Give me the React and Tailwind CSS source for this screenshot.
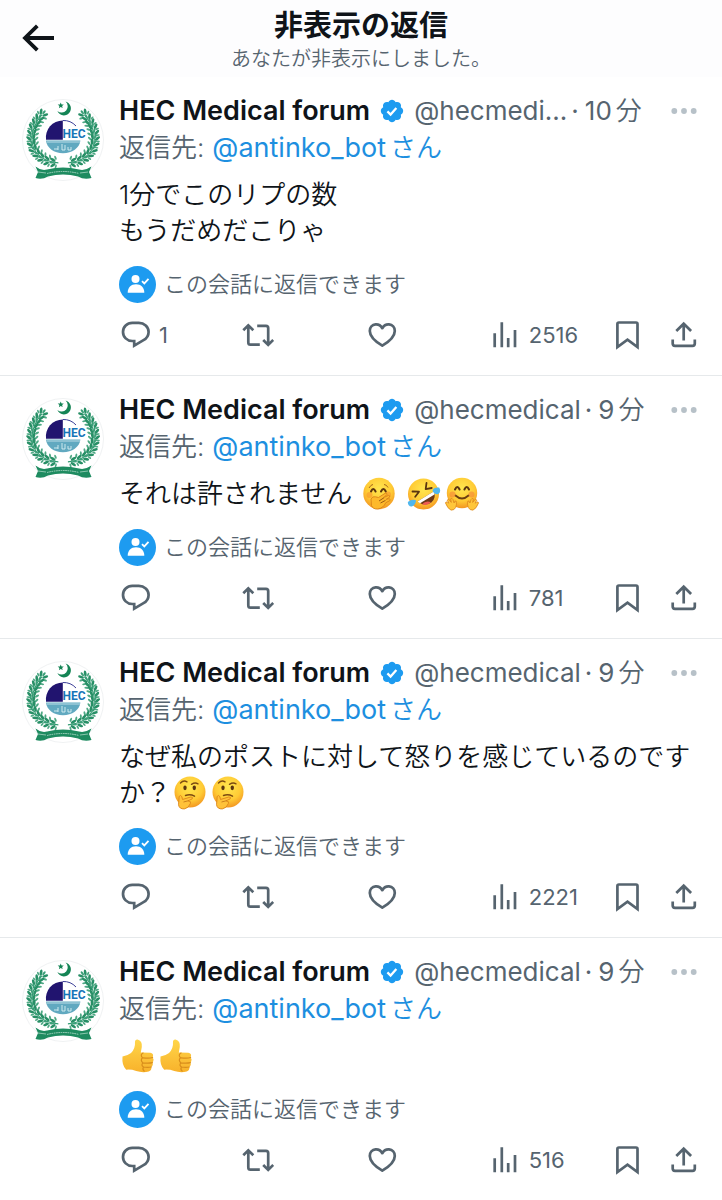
import React from "react";

const FONT = "font-[Inter,'Noto_Sans_CJK_JP',sans-serif]";

/* ---------- avatar ---------- */

const BRANCH = [
  [18, 13], [14, 18], [11, 23], [8.5, 28], [7.5, 34], [7, 40], [8, 46], [10, 52], [14, 57], [19, 61], [25, 64], [32, 65.5],
];

function Branch() {
  return (
    <g>
      <path
        d="M18 13C11 21 7 30 7 40C7 54 18 65 36 66"
        fill="none"
        stroke="#2f9a70"
        strokeWidth="1.200"
      />
      {BRANCH.map(([x, y], i) => {
        const angle = -50 - i * 12;
        return (
          <g key={i} transform={`translate(${x} ${y}) rotate(${angle})`} fill="#278f66">
            <ellipse cx="2" cy="-3" rx="3.400" ry="1.500" transform="rotate(-32 2 -3)" />
            <ellipse cx="2" cy="3" rx="3.400" ry="1.500" transform="rotate(32 2 3)" />
            <ellipse cx="-1" cy="5" rx="2.400" ry="1.100" transform="rotate(70 -1 5)" fill="#4fa985" />
            <ellipse cx="-1" cy="-4.500" rx="2.200" ry="1" transform="rotate(-70 -1 -4.500)" fill="#4fa985" />
            <ellipse cx="3.400" cy="0" rx="2.600" ry="1.100" fill="#3b9f78" />
          </g>
        );
      })}
    </g>
  );
}

function Avatar() {
  return (
    <svg viewBox="0 0 82 82" className="size-[82px] shrink-0" role="img" aria-label="HEC Medical forum">
      <circle cx="41" cy="41" r="40.500" fill="#fff" stroke="#f0f2f3" />
      <path d="M43.600 2.600a7 7 0 1 1-8.200 9.400 6.200 6.200 0 0 0 8.200-9.400Z" fill="#148455" />
      <path d="m38.700 3.400.9 2 2.200.1-1.700 1.400.6 2.200-2-1.200-1.800 1.300.5-2.200-1.700-1.400 2.200-.2Z" fill="#148455" />
      <g transform="translate(3.600 3.800) scale(.91)">
        <Branch />
        <g transform="translate(82.500 0) scale(-1 1)">
          <Branch />
        </g>
      </g>
      <path d="M24 40.800A17 17 0 0 1 40.800 21.500V40.800Z" fill="#21146f" />
      <path d="M40.800 21.500A17 17 0 0 1 54 27" fill="none" stroke="#3a3d96" strokeWidth="1" />
      <path d="M24 41.500H58.400C57.600 49 50 54.300 41 54.300S24.800 49 24 41.500Z" fill="#61a9c0" />
      <path d="M25 43H58" stroke="#d2eaf0" strokeWidth=".8" />
      <path d="M36 47v4M40 45v6h3v-5M46 48v3h3v-3M32 50h4" fill="none" stroke="#d9f0f4" strokeWidth=".9" />
      <text x="40.500" y="38.500" fontSize="12" fontWeight="700" fill="#1675b8" fontFamily="Roboto,'Liberation Sans',sans-serif">
        HEC
      </text>
      <path d="M13.500 67.500Q19 72 25 70.500Q41 66.500 57 70.500Q63 72 69.500 67.500L67 73L69.500 79Q62 81 56 77.500Q41 73.500 26 77.500Q20 81 13.500 79L16 73Z" fill="#1e8b60" />
      <path d="M25 74.500Q41 70.500 57 74.500" fill="none" stroke="#a6d5c2" strokeWidth="1" strokeDasharray="1.600 .7" />
      <path d="M16 73l8 1M58 74l8-1" stroke="#a6d5c2" strokeWidth=".8" />
    </svg>
  );
}

/* ---------- emoji ---------- */

function FaceFill({ id }) {
  return (
    <defs>
      <radialGradient id={id} cx="50%" cy="35%" r="68%">
        <stop offset="0" stopColor="#ffe64f" />
        <stop offset=".6" stopColor="#ffcb35" />
        <stop offset="1" stopColor="#f19020" />
      </radialGradient>
    </defs>
  );
}

function HandOverMouth() {
  return (
    <>
      <FaceFill id="face-giggle" />
      <circle cx="17" cy="16.500" r="15.700" fill="url(#face-giggle)" />
      <g fill="none" stroke="#5b3510" strokeWidth="2" strokeLinecap="round">
        <path d="M9 14.500q2.200-5 4.600 0M19 14.500q2.400-5 4.800 0" />
      </g>
      <path d="M7 11q2-3.500 4-3.500M22 7.500q2.500 0 4 3" fill="none" stroke="#a8691a" strokeWidth="1" />
      <circle cx="7.500" cy="18" r="3" fill="#f68a2c" opacity=".5" />
      <circle cx="26" cy="17.500" r="3" fill="#f68a2c" opacity=".5" />
      <path d="M9 22q1.500-3 4.500-2.200l3 .7 6.800-4.300q1.800-.5 1.700 1.200l-3 3 4.500-2q1.700 0 1.200 1.700l-3.500 2.300 3-.7q1.500.5.6 2l-4 2q-2.500 5.500-8 6.300-5 .3-6.300-3.500Z" fill="#fdb92c" stroke="#d9821a" strokeWidth=".9" />
      <path d="m17 24 5-3.300M18.500 26l5-2.600" stroke="#9a5a14" strokeWidth="1" />
    </>
  );
}

function Rofl() {
  return (
    <>
      <FaceFill id="face-rofl" />
      <circle cx="16.500" cy="17" r="15.500" fill="url(#face-rofl)" />
      <path d="m5.500 14.500 6.500.2-3.800 5M19.500 6l-.8 6.200 6-1.200" fill="none" stroke="#5b3510" strokeWidth="1.800" strokeLinecap="round" strokeLinejoin="round" />
      <path d="M10.500 24.500L27 14.200q2.500 6.500-2.500 11-6.500 5-14-.7Z" fill="#6c3817" />
      <path d="M10.500 24.500L27 14.200q.7 1.800.5 3.200L13 26.300Z" fill="#fff" />
      <path d="M15 27.300q4-4.500 9-2-4 3.800-9 2Z" fill="#ed5b53" />
      <path d="M.8 25q4-3.300 8.200-1.800 0 4.500-4.200 6.200-3.800.3-4-4.400Z" fill="#50b7ee" />
      <path d="M25.500 13.500q1-3.500 6.700-3 2.500 4.500-1.200 6.800-4 .3-5.500-3.800Z" fill="#50b7ee" />
    </>
  );
}

function Hug() {
  return (
    <>
      <FaceFill id="face-hug" />
      <circle cx="17" cy="16" r="15.200" fill="url(#face-hug)" />
      <path d="M10 12.500q2.300-5 4.600 0M19.400 12.500q2.300-5 4.600 0" fill="none" stroke="#5b3510" strokeWidth="2" strokeLinecap="round" />
      <path d="M10.500 18.500q6.500 6 13 0" fill="none" stroke="#6b3f12" strokeWidth="1.800" strokeLinecap="round" />
      <circle cx="7.500" cy="17.500" r="3" fill="#f4763a" opacity=".5" />
      <circle cx="26.500" cy="17.500" r="3" fill="#f4763a" opacity=".5" />
      <path id="hug-hand" d="M.5 26q.2-1.700 1.800-.8l1.500 1-1.500-3q.7-1.700 2-.4l2 2.600-.6-3.500q1.300-1.300 2.200.6l1.200 3.500q.5-2.500 2-2 1 3-.3 6.300-1.500 3.200-4.800 2.800Q2.500 31.500.5 26Z" fill="#ffc63a" stroke="#dc861c" strokeWidth=".8" />
      <use href="#hug-hand" transform="translate(34 0) scale(-1 1)" />
    </>
  );
}

function Thinking() {
  return (
    <>
      <FaceFill id="face-thinking" />
      <circle cx="17" cy="16" r="15.500" fill="url(#face-thinking)" />
      <ellipse cx="12" cy="11.800" rx="1.700" ry="2.400" fill="#5b3510" />
      <ellipse cx="21.300" cy="11.800" rx="1.700" ry="2.400" fill="#5b3510" />
      <path d="M7.500 7q3-3.200 6.500-1.200M18.500 8.300q3.500-2.200 6.500-.5" fill="none" stroke="#7c4b12" strokeWidth="1.400" strokeLinecap="round" />
      <path d="M12.500 19.500q4.500-1.800 9 .6" fill="none" stroke="#7c4b12" strokeWidth="1.500" strokeLinecap="round" />
      <path d="M6 23q-.5-3.300 1.600-3.500 1.500.3 1.900 4l8.500-2.600q2.300.2 1.200 2l-4.200 1.900q3.500.5 2.400 2.600-1.400 4.500-6 5.500-5.200.3-5.900-4.200Z" fill="#ffc23a" stroke="#db8519" strokeWidth=".9" />
      <path d="m10.500 26 5-1.300" stroke="#c57818" strokeWidth=".9" />
    </>
  );
}

function ThumbsUp() {
  return (
    <>
      <defs>
        <linearGradient id="thumb" x1="0" y1="0" x2="0" y2="1">
          <stop offset="0" stopColor="#ffd64a" />
          <stop offset="1" stopColor="#f8b22b" />
        </linearGradient>
      </defs>
      <path d="M1.500 17.500q5-.8 8.500-3.500 4.500-4.500 4-11.500Q14.300.2 16.500.5q5 1.200 4.300 7.500l-1 5.500 9.500.3q3.400.7 2.700 3.500l-.4 1.200q1.600 1.500.7 3.800l-.9 1.300q1 1.800-.1 3.400l-1 1q.7 3.300-2.600 4.500-6.200 1.500-12.500-.5-5-1.800-10-1.300-4.500-4.200-3.700-13.200Z" fill="url(#thumb)" />
      <path d="M31.600 18.500q-3 1-9.600.3M31.400 23.600q-3.500.9-9.400.2M30.300 28q-3.500.8-8 0M22 14q-3.200 1.800-.5 4.800-2.500 2.400.3 5-2 2.600.7 4.300-1.500 2 .7 4" fill="none" stroke="#d98e1c" strokeWidth="1.200" strokeLinecap="round" />
    </>
  );
}

const EMOJI = {
  giggle: ["🤭", HandOverMouth],
  rofl: ["🤣", Rofl],
  hug: ["🤗", Hug],
  thinking: ["🤔", Thinking],
  thumb: ["👍", ThumbsUp],
};

function Emoji({ name }) {
  const [label, Drawing] = EMOJI[name];
  return (
    <svg viewBox="0 0 34 34" role="img" aria-label={label} className="mx-[2px] inline-block size-[34px] align-[-8px]">
      <Drawing />
    </svg>
  );
}

/* ---------- icons ---------- */

function Icon({ children }) {
  return (
    <svg
      viewBox="0 0 32 32"
      className="size-8 shrink-0"
      fill="none"
      stroke="currentColor"
      strokeWidth="2.700"
      aria-hidden="true"
    >
      {children}
    </svg>
  );
}

const ReplyIcon = () => (
  <Icon>
    <path d="M13.300 3.800H19.800C25.200 3.800 29.600 7.800 29.600 12.900C29.600 16.300 27.700 19.300 24.500 21.100L15.200 26.600V22H13.300C8 22 4 18 4 12.900S8 3.800 13.300 3.800Z" />
  </Icon>
);
const RepostIcon = () => (
  <Icon>
    <path d="M1.300 11.200L6.300 6.300L11.300 11.200M6.300 6.500V23.500Q6.300 25.700 8.500 25.700H17.800M15.200 6.800H24Q26.200 6.800 26.200 9V25.700M21.200 21L26.200 25.900L31.200 21" />
  </Icon>
);
const LikeIcon = () => (
  <Icon>
    <path strokeLinejoin="round" d="M16.300 9.200C18 6.300 20.500 5.200 23 5.400c3.400.3 5.800 3 5.800 6.500 0 5.800-5.200 10.300-12.500 14.800C9 22.200 3.800 17.700 3.800 11.900c0-3.500 2.400-6.200 5.800-6.500 2.500-.2 5 .9 6.700 3.800Z" />
  </Icon>
);
const ViewsIcon = () => (
  <Icon>
    <path d="M5.700 14.300V28.300M12.800 3.300V28.300M19.200 19V28.300M26 11V28.300" />
  </Icon>
);
const BookmarkIcon = () => (
  <Icon>
    <path d="M5.400 5Q5.400 3.500 6.900 3.500H24Q25.500 3.500 25.500 5V28L15.500 20.700L5.400 28Z" />
  </Icon>
);
const ShareIcon = () => (
  <Icon>
    <path d="M8.300 12L15.700 4.700L23.100 12M15.700 5V21.500M4.700 20.500V24.500Q4.700 26.800 7 26.800H24.500Q26.800 26.800 26.800 24.500V20.500" />
  </Icon>
);

function VerifiedBadge() {
  return (
    <svg viewBox="1 1 22 22" className="size-6 shrink-0 self-center" fill="#1d9bf0" role="img" aria-label="認証済み">
      <path d="M22.250 12c0-1.430-.88-2.670-2.190-3.340.46-1.390.2-2.900-.81-3.910s-2.520-1.270-3.910-.81c-.66-1.310-1.910-2.190-3.340-2.190s-2.670.88-3.330 2.190c-1.400-.46-2.910-.2-3.920.81s-1.260 2.520-.8 3.910c-1.310.67-2.200 1.910-2.200 3.340s.89 2.670 2.200 3.340c-.46 1.390-.21 2.900.8 3.910s2.520 1.260 3.910.81c.67 1.310 1.910 2.190 3.340 2.190s2.680-.88 3.340-2.190c1.390.45 2.900.2 3.910-.81s1.270-2.520.81-3.910c1.310-.67 2.190-1.910 2.190-3.340z" />
      <path d="m7.800 12.300 2.900 2.900 5.300-5.900" fill="none" stroke="#fff" strokeWidth="2.100" />
    </svg>
  );
}

function CanReplyNote() {
  return (
    <div className="mt-4 flex h-[38px] items-center gap-2 text-[22px] text-[#56646f]">
      <svg viewBox="0 0 37 37" className="size-[37px] shrink-0" aria-hidden="true">
        <circle cx="18.500" cy="18.500" r="18.500" fill="#1d9bf0" />
        <circle cx="16.500" cy="13" r="4" fill="#fff" />
        <path d="M8.700 26.800C8.700 21.500 12 18.300 17 18.300S25.300 21.500 25.300 26.800Z" fill="#fff" />
        <path d="m23 15.200 2.300 2.200 4.200-4.600" fill="none" stroke="#fff" strokeWidth="1.800" />
      </svg>
      <span className="font-[350]">この会話に返信できます</span>
    </div>
  );
}

/* ---------- posts ---------- */

function Action({ label, icon, count }) {
  return (
    <button type="button" aria-label={label} className="flex h-8 items-center gap-2 text-[22px]">
      {icon}
      {count && <span>{count}</span>}
    </button>
  );
}

function Post({ handle = "@hecmedical", time, replies, views, children }) {
  return (
    <article className="flex gap-[15px] border-b border-[#e6e9eb] pt-[15px] pr-[22px] pb-6 pl-[22px] last:border-b-0">
      <div className="pt-[7px]">
        <Avatar />
      </div>
      <div className="min-w-0 flex-1">
        <div className="flex h-[37px] items-baseline text-[26px] leading-[37px] whitespace-nowrap text-[#56646f]">
          <span className="mr-2.5 shrink-0 text-[27px] font-semibold text-[#0f1419]">HEC Medical forum</span>
          <VerifiedBadge />
          <a href="#profile" className="ml-2.5">
            {handle}
          </a>
          <span className="ml-1 shrink-0">·</span>
          <time className="ml-1.5 shrink-0">
            {time}
            <span className="ml-1 font-[350]">分</span>
          </time>
          <button type="button" aria-label="もっと見る" className="ml-auto shrink-0 self-center pl-4">
            <svg viewBox="0 0 32 32" className="size-8" fill="#b7c1c8" aria-hidden="true">
              <circle cx="6.300" cy="16" r="2.900" />
              <circle cx="16" cy="16" r="2.900" />
              <circle cx="25.700" cy="16" r="2.900" />
            </svg>
          </button>
        </div>
        <p className="h-[37px] text-[26px] leading-[37px] whitespace-nowrap text-[#56646f]">
          <span className="font-[350]">返信先:</span>
          <a href="#replying-to" className="ml-2 text-[27px] text-[#1d8fe0]">
            @antinko_bot
            <span className="ml-1 text-[26px] font-[350]">さん</span>
          </a>
        </p>
        <div className="mt-[11px] text-[26px] leading-9 font-[350] text-[#0f1419]">{children}</div>
        <CanReplyNote />
        <div className="mt-4 grid grid-cols-[repeat(4,minmax(0,1fr))_auto] text-[#56646f]">
          <Action label="返信" icon={<ReplyIcon />} count={replies} />
          <Action label="リポスト" icon={<RepostIcon />} />
          <Action label="いいね" icon={<LikeIcon />} />
          <Action label="表示回数" icon={<ViewsIcon />} count={views} />
          <div className="flex gap-6">
            <Action label="ブックマーク" icon={<BookmarkIcon />} />
            <Action label="共有" icon={<ShareIcon />} />
          </div>
        </div>
      </div>
    </article>
  );
}

export default function App() {
  return (
    <div lang="ja" className={`min-h-screen bg-white ${FONT}`}>
      <header className="grid grid-cols-[32px_1fr_32px] items-center bg-[#fdfdfe] px-[22px] pt-2 pb-1.5">
        <button type="button" aria-label="戻る" className="pb-1">
          <svg viewBox="0 0 32 32" className="size-8" fill="none" stroke="#0f1419" strokeWidth="3.800" aria-hidden="true">
            <path d="M15.300 3.800L3 16L15.300 28.200M2.500 16H32" />
          </svg>
        </button>
        <div className="text-center">
          <h1 className="text-[29px] leading-9 font-bold text-[#0f1419]">非表示の返信</h1>
          <p className="mt-[3px] text-[20px] leading-6 font-[350] text-[#56646f]">あなたが非表示にしました。</p>
        </div>
      </header>
      <main>
        <Post handle="@hecmedi..." time="10" replies="1" views="2516">
          <p>
            1分でこのリプの数
            <br />
            もうだめだこりゃ
          </p>
        </Post>
        <Post time="9" views="781">
          <p>
            それは許されません <Emoji name="giggle" /> <Emoji name="rofl" />
            <Emoji name="hug" />
          </p>
        </Post>
        <Post time="9" views="2221">
          <p>
            なぜ私のポストに対して怒りを感じているのですか？
            <Emoji name="thinking" />
            <Emoji name="thinking" />
          </p>
        </Post>
        <Post time="9" views="516">
          <p>
            <Emoji name="thumb" />
            <Emoji name="thumb" />
          </p>
        </Post>
      </main>
    </div>
  );
}
